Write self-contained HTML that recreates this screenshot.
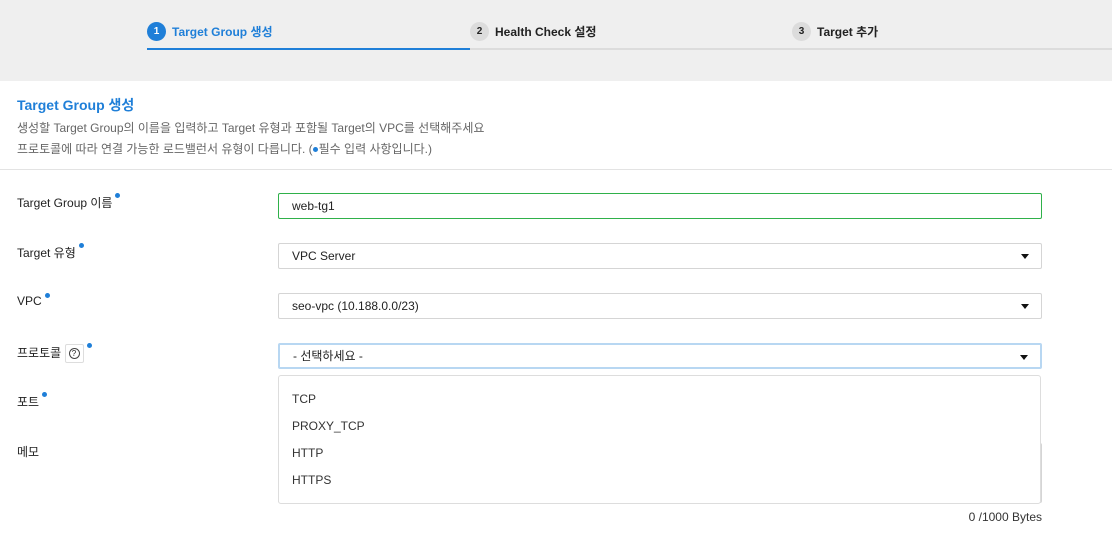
<!DOCTYPE html>
<html><head><meta charset="utf-8"><style>
*{box-sizing:border-box;margin:0;padding:0}
body{width:1112px;height:542px;background:#fff;font-family:"Liberation Sans","Noto Sans CJK KR",sans-serif;font-size:12px;color:#222;position:relative;overflow:hidden}
.top{position:absolute;left:0;top:0;width:1112px;height:81px;background:#efefef}
.line{position:absolute;top:48px;height:2px;background:#dcdcdc;left:470px;right:0}
.line.b{left:147px;width:323px;right:auto;background:#1f7fd8}
.step{position:absolute;top:22px;display:flex;align-items:center;font-weight:bold;font-size:12px;color:#222}
.step .c{width:19px;height:19px;border-radius:50%;background:#dcdcdc;color:#222;font-size:10px;display:flex;align-items:center;justify-content:center;margin-right:6px}
.step.a{color:#1f7fd8}.step.a .c{background:#1f7fd8;color:#fff}
.abs{position:absolute}
.lbl{position:absolute;left:17px;font-size:12px;color:#222}
.dot{display:inline-block;width:5px;height:5px;border-radius:50%;background:#1f7fd8;vertical-align:top;margin-left:3px;margin-top:-1px}
.inp{position:absolute;left:278px;width:764px;height:26px;border:1px solid #d5d5d5;border-radius:2px;padding-left:13px;line-height:24px;font-size:12px;color:#222;background:#fff}
.arr{position:absolute;right:12px;top:10px;width:0;height:0;border-left:4px solid transparent;border-right:4px solid transparent;border-top:5px solid #111}
</style></head><body>
<div class="top"></div>
<div class="line"></div><div class="line b"></div>
<div class="step a" style="left:147px"><span class="c">1</span>Target Group 생성</div>
<div class="step" style="left:470px"><span class="c">2</span>Health Check 설정</div>
<div class="step" style="left:792px"><span class="c">3</span>Target 추가</div>
<div class="abs" style="left:17px;top:95px;font-size:14px;font-weight:bold;color:#1f7fd8">Target Group 생성</div>
<div class="abs" style="left:17px;top:119px;color:#666">생성할 Target Group의 이름을 입력하고 Target 유형과 포함될 Target의 VPC를 선택해주세요</div>
<div class="abs" style="left:17px;top:140px;color:#666">프로토콜에 따라 연결 가능한 로드밸런서 유형이 다릅니다. (<span class="dot" style="margin:0 1px 0 0;vertical-align:middle"></span>필수 입력 사항입니다.)</div>
<div class="abs" style="left:0;top:169px;width:1112px;height:1px;background:#e3e3e3"></div>
<div class="lbl" style="top:194px">Target Group 이름<span class="dot"></span></div>
<div class="inp" style="top:193px;border-color:#2fb14a">web-tg1</div>
<div class="lbl" style="top:244px">Target 유형<span class="dot"></span></div>
<div class="inp" style="top:243px">VPC Server<span class="arr"></span></div>
<div class="lbl" style="top:294px">VPC<span class="dot"></span></div>
<div class="inp" style="top:293px">seo-vpc (10.188.0.0/23)<span class="arr"></span></div>
<div class="lbl" style="top:344px">프로토콜 <span style="display:inline-block;width:19px;height:19px;border:1px solid #ddd;border-radius:2px;vertical-align:middle;position:relative"><span style="position:absolute;left:3px;top:3px;width:11px;height:11px;border:1px solid #444;border-radius:50%;font-size:8px;line-height:9px;text-align:center">?</span></span><span class="dot"></span></div>
<div class="inp" style="top:343px;border:2px solid #b8d7f2;line-height:22px">- 선택하세요 -<span class="arr"></span></div>
<div class="lbl" style="top:393px">포트<span class="dot"></span></div>
<div class="lbl" style="top:443px">메모</div>
<div class="inp" style="top:443px;height:60px"></div>
<div class="abs" style="left:278px;top:375px;width:763px;height:129px;border:1px solid #ddd;border-radius:3px;background:#fff;color:#333">
<div class="abs" style="left:13px;top:16px">TCP</div>
<div class="abs" style="left:13px;top:43px">PROXY_TCP</div>
<div class="abs" style="left:13px;top:70px">HTTP</div>
<div class="abs" style="left:13px;top:97px">HTTPS</div>
</div>
<div class="abs" style="right:70px;top:510px;color:#333">0 /1000 Bytes</div>
</body></html>
